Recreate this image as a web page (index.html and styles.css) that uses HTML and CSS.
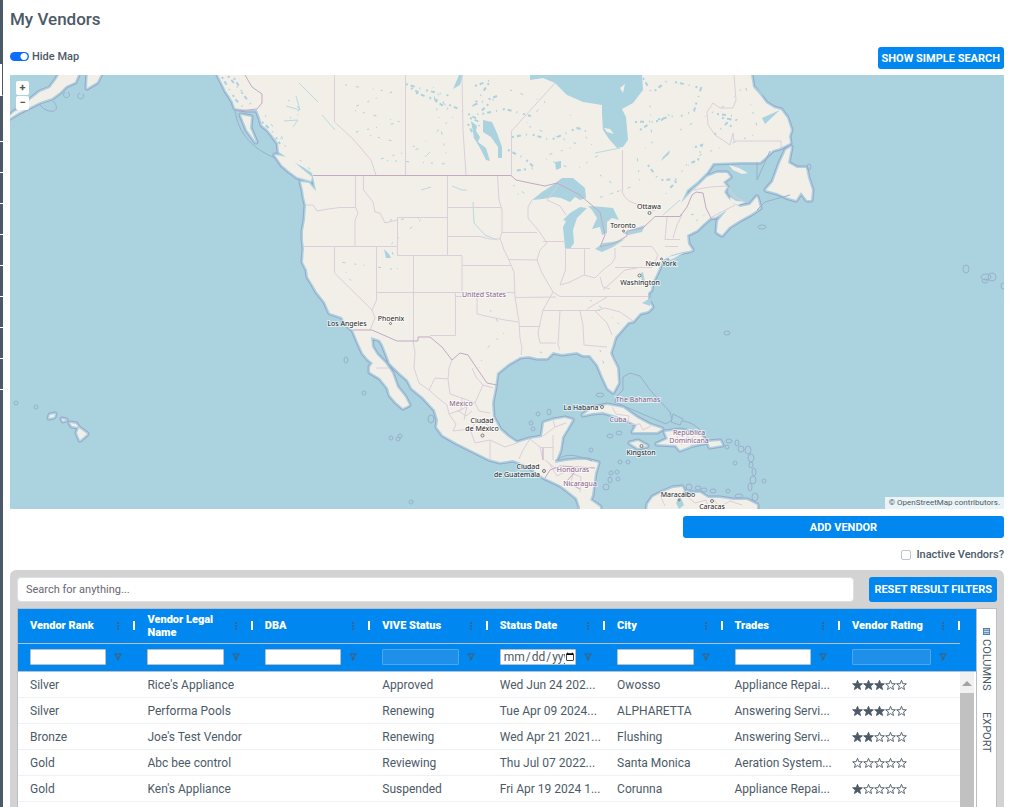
FILE: index.html
```html
<!DOCTYPE html>
<html lang="en">
<head>
    <meta charset="UTF-8">
    <meta name="viewport" content="width=device-width, initial-scale=1.0">
    <title>My Vendors</title>
    <link rel="stylesheet" href="styles.css">
</head>
<body>
    <!-- Shared icons -->
    <svg class="sprite" aria-hidden="true">
        <symbol id="star" viewBox="0 0 12 12">
            <path d="M6 .9 7.4 4.5 11.3 4.7 8.3 7.1 9.3 10.9 6 8.8 2.7 10.9 3.7 7.1 .7 4.7 4.6 4.5Z"/>
        </symbol>
        <symbol id="funnel" viewBox="0 0 8 8">
            <path d="M.8 1H7.2L4.8 4V6.2L3.3 7.2V4Z" fill="none" stroke="#4c5a67"/>
        </symbol>
        <symbol id="dots" viewBox="0 0 4 8">
            <path d="M1 0h2v2H1zM1 3h2v2H1zM1 6h2v2H1z" fill="#35659a"/>
        </symbol>
    </svg>

    <div class="app">
        <div class="sidebar">
            <div class="side-top"></div>
            <div class="side-item active"></div>
            <div class="side-item tall"></div>
            <div class="side-item"></div>
            <div class="side-item"></div>
            <div class="side-item"></div>
            <div class="side-item"></div>
            <div class="side-item"></div>
            <div class="side-item"></div>
            <div class="side-item"></div>
            <div class="side-item"></div>
        </div>

        <main class="content">
            <h1>My Vendors</h1>

            <div class="toolbar">
                <label class="switch"><input type="checkbox" checked>Hide Map</label>
                <button class="btn">SHOW SIMPLE SEARCH</button>
            </div>

            <div class="map">
                <svg class="map-svg" viewBox="10 75 994 434" role="img" aria-label="Map">
                    <defs>
                        <g id="land">
                            <path d="M218 60V75L222 83 226 91 230 97 233 102 235 108 246 110 257 110 260 118 262 125 267 129 272 135 278 143 279 152 290 160 303 167 312 173 314 181 316 191 313 188 309 183 301 182 303 190 304 197 306 205 305 220 303 231 303 240 304 248 303 262 307 270 308 277 313 285 317 292 325 302 328 309 330 313 342 317 347 325 353 330 358 342 363 353 368 359 373 363 370 367 370 372 380 378 388 388 390 395 396 402 403 408 409 405 405 397 397 387 392 373 385 363 377 355 372 347 371 337 380 340 383 345 387 355 390 363 400 373 408 380 412 388 423 397 435 410 438 420 437 427 443 435 457 443 477 453 489 459 500 462 513 460 527 465 543 477 560 485 563 487 577 498 580 507V525H600V507L590 500 592 495 593 487 595 473 598 463 587 460 577 460 566 461 555 463 560 450 562 437 568 427 572 420 565 418 553 420 544 423 542 437 530 439 517 443 508 437 500 430 493 417 492 403 495 387 497 373 508 364 520 357 529 356 537 358 547 358 553 352 562 354 577 352 583 355 590 355 598 365 603 377 608 388 613 392 618 383 617 368 612 358 610 353 612 347 615 337 628 322 633 321 640 313 648 311 652 307 648 300 648 293 651 290 652 283 657 273 660 266 663 260 672 255 683 252 689 251 692 250 688 244 687 235 697 230 703 224 710 218 716 217 727 210 718 221 717 232 722 235 729 227 740 220 751 214 760 208 757 197 750 205 740 207 733 203 728 198 724 192 727 187 723 182 730 177 727 173 717 173 707 177 699 185 693 190 681 203 687 190 697 182 707 172 713 163 740 162 760 162 773 150 780 148 790 143 789 136 791 130 787 118 781 110 774 108 766 103 760 95 753 87 751 75V60Z"/>
                            <path d="M791 147 786 150 780 163 773 182 766 190 777 193 786 197 796 200 801 192 807 200 811 200 812 190 808 178 806 168 797 168 788 163Z"/>
                            <path d="M275 155 282 156 290 158 301 168 312 177 311 181 297 177 289 171 282 165Z"/>
                            <path d="M241 115 251 117 250 128 253 135 256 142 247 130Z"/>
                            <path d="M5 121 14 112 22 108 30 100 40 92 50 88 56 80 62 70H80L75 82 66 86 60 92 52 98 40 102 30 107 18 113Z"/>
                            <path d="M88 70 101 74 97 82 87 88Z"/>
                            <path d="M583 415 593 408 607 405 623 408 637 418 650 425 662 429 657 432 633 432 637 425 620 417 603 412 592 413Z"/>
                            <path d="M665 432 680 430 690 432 700 435 707 442 693 445 680 450 676 445 657 444 668 439Z"/>
                            <path d="M708 442 720 441 722 445 710 447Z"/>
                            <path d="M630 443 638 441 647 446 638 448Z"/>
                            <path d="M645 525 648 504 653 497 663 492 673 488 682 487 684 491 679 496 687 497 690 493 700 493 708 498 720 498 733 500 747 500 757 505V525Z"/>
                            <path d="M79 428 87 434 80 440 77 433ZM50 415 55 414 54 417 49 418ZM62 419 66 420 63 421ZM70 423 76 424 78 427 72 426Z"/>
                        </g>
                    </defs>

                    <rect x="10" y="75" width="994" height="434" fill="#aad3df"/>

                    <!-- Territorial waters drawn as a halo round the land -->
                    <use href="#land" class="halo-line"/>
                    <use href="#land" class="halo-water"/>
                    <use href="#land" fill="#f2efe9"/>
                    <path class="islet" d="M235 110C238 135 255 150 275 158M630 373 640 376 650 390 670 412 672 420 666 424 640 413 615 402 616 397 623 390 623 377ZM673 414 683 419 680 425 671 422ZM683 421C695 423 701 430 705 437M757 210 765 202 790 195M757 162V180L770 151M555 461C565 453 575 454 592 461"/>
                    <path class="islet" d="M40 105 44 109C56 115 60 108 53 101M65 92a3 3 0 1 0 3 0M80 93a3 3 0 1 0 3 1"/>

                    <!-- Inland water -->
                    <g fill="#aad3df">
                        <path d="M530 75V80L543 78 555 83 567 95 583 102 602 105 602 115 603 130 609 139 617 148 623 147 628 140 626 117 622 109 633 103 643 90 642 75Z"/>
                        <path d="M532 200 542 192 553 185 562 178 573 178 585 188 586 198 580 200 575 197 570 202 561 198 553 197 543 199Z"/>
                        <path d="M565 248 563 227 566 221 563 220 570 213 580 207 587 208 577 218 573 230 574 243 570 249Z"/>
                        <path d="M588 206 603 207 613 208 619 220 612 218 607 222 607 233 602 235 600 227 592 229 597 218 592 210Z"/>
                        <path d="M595 249 603 243 612 242 625 239 613 247 602 252ZM623 233 630 230 645 225 642 232 628 235Z"/>
                        <path d="M483 120 492 122 497 133 502 147 502 158 498 158 498 147 491 137 483 132ZM471 121 477 126 476 131 480 137 478 142 486 148 490 161 486 160 480 148 474 138Z"/>
                        <path d="M555 162 561 161 561 168 556 170ZM459 75H463L460 85 453 89ZM384 249 389 254 391 258 386 258ZM663 157 670 150 669 154 661 161ZM676 503 680 496 684 505 679 509ZM641 273 643 272 646 287 642 284ZM652 297 642 303 650 306ZM762 118 780 110 765 124ZM767 98 757 91 754 86Z"/>
                    </g>
                    <g fill="#f2efe9">
                        <path d="M604 128 610 129 614 134 607 132ZM729 165 739 168 748 173 742 174 733 170ZM730 197 736 201 745 202 738 205 731 202ZM620 88 625 84 623 93ZM668 257 684 253 670 260Z"/>
                    </g>
                    <g class="speckle">
                        <path d="M411 88 424 96 445 103 461 110 479 120M416 93 431 98 448 109M406 84 425 90 451 96M475 86 491 80 474 105 497 96 477 115 505 109 531 116"/>
                        <path d="M512 137 530 134 551 140 577 128 591 133M508 150 524 158 535 168 513 171M468 124 476 140M470 118 480 122 478 131"/>
                        <path d="M635 122 660 121 673 112M640 130 655 120 674 116M643 78 652 93 668 80M675 82 701 88 694 111 681 116"/>
                        <path d="M717 114 734 116 726 124 714 135M722 118 736 120 728 129M695 147 702 145 698 160 686 165M648 165 659 180 679 179 668 190"/>
                        <path d="M222 77 229 89 236 100 244 108M228 76 240 90 252 106M234 78 247 100M262 122 272 131 280 144"/>
                    </g>
                    <g class="speckle sparse">
                        <path d="M345 85 392 92 349 109 401 122 356 132 421 148 377 160 448 164 432 85 453 117 425 142"/>
                        <path d="M510 90 545 102 525 125 580 145 541 157 575 170 599 155 568 112M600 175 622 190 598 198 640 184 637 155 652 143 650 105"/>
                        <path d="M680 130 726 105 745 85 759 133 700 155 680 173 665 195M513 185 528 196 512 193M390 220 423 218 390 245 398 270 340 262 351 281"/>
                        <path d="M490 310 505 332 485 350 479 368M590 300 605 310 620 325M680 215 706 214 690 225M600 350 607 376"/>
                        <path d="M265 115 275 130 286 147 280 133M300 160 315 174M540 352 552 355M288 100 305 112 290 118 301 108"/>
                    </g>
                    <path class="river" d="M299 83 310 94 318 102M286 106 300 110 296 96M284 121 298 120 293 127M452 186 462 190 467 190M421 190 431 187M473 202 474 223 485 235 497 240M663 215 680 200M620 148 595 153M425 157 430 152M322 115 335 130"/>

                    <!-- State and province lines -->
                    <g class="state">
                        <path d="M405.5 75V175M462 75 463 130 466 175M511.500 175V131L555 83M622.500 150V193Q626 202 640 205L655 211M334.500 75V122L340 127 352 138 360 147 371 160 376 175"/>
                        <path d="M306 205 313 205 317 211 328 209 340 207.500H355M355.500 175V207L358 213 355 220V247M303 246.500H397M363.500 175V190L373 202 375 212 380 213 385 223 397 220M397.500 217.500H447M397.500 217V255M447.500 175V255M447 207.500H501M447 236.500H480L490 239 500 239M397 255.500H462V292"/>
                        <path d="M497.500 175 499 200 502 210V232L500 238 504 250 508 258 514 272 515 297 519 322 520 338 522 348 521 355M502 232.500H537M462 265.500H511M376 292.500H515M413.500 255V341M376.500 247V300L372 310 375 318 370 330M334.500 247V273L372 310M455.500 292V335.500H430M455 296.500H477V314L490 317 505 320 518 322M508 259.500 538 260M515 297.500 556 297M519 326.500H539"/>
                        <path d="M560 183 547 200 560 206 566 215M532 200 528 207V218L538 230 547 243 540 250 537 260 542 273 553 292 543 310 538 333 540 343H556M543 241.500H565M565.500 248V270L560 285 570 282 584 275 595 278 603 270 612 263 615 258V248M565 248.500H590M584.500 248V275M553 292 560 296.500H648M543 310.500H600M560 311 558 345 560 350M580 311 583 325 584 345 607 347M615 267.500H652M621 246.500H652L658 255 655 262M667 217 665 240M682 215 677 225 673 238M680 239.500H665M665 246.500H678"/>
                        <path d="M595 311 607 323 612 335M595 311 605 308 620 312 633 321M587 309 607 297M603 290 612 282 625 270 637 268M600 277 603 287 610 289M734 75 736 100 733 108 720 108 713 103 707 112 708 125 715 135 730 145 733 133 734 141H781V148M693 190 710 187 727 186 735 197 745 202M710 218 735 205"/>
                        <path d="M413 341 415 352 414 368 419 383 429 390 435 378 448 379 449 368 452 360M429 390 438 398 447 405 449 414 461 410 462 398 475 403 483 385 476 377 472 368M448 379 450 394 462 398M483 385 493 388M475 403 479 411 490 413M449 414 456 424 453 431 470 429 480 419 493 430M470 429 475 443 490 440 490 460M490 440 505 447 517 443M530 439 523 450 519 459M530 439 540 447 543 460M553 420 555 427 543 436M555 427 566 423M553 435V460M540 447.500H553M545 460 560 472 575 467 570 485 590 485M549 463 557 476 566 471 581 477 580 492M376 368H388M461 410 467 406 464 420M457 410 466 416 472 411"/>
                        <path d="M612 407 616 414 629 416 628 425 640 424 643 430 651 426M680 431 677 437 682 445M686 432 689 440 695 436M690 446 699 439M660 495 665 506M688 497 695 503 706 500 709 509M714 500 720 507 730 501 742 505"/>
                    </g>
                    <g class="country">
                        <path d="M313 175.500H511L516 180 530 183 545 186 557 183 580 195 588 202 600 212 605 235 600 247 615 243 627 236V231L643 228 655 216.500H680L687 207 692 195 696 192 703 193 706 208 712 220"/>
                        <path d="M353 330H372L397 341H418V337H430L442 347 452 360 460 353 468 355 478 370 487 383 497 385M245 75 252 87 262 94 262 103 257 109 238 111M545 478 550 470 560 466 595 468M543 460 543 448M575 472 566 482 580 489"/>
                    </g>

                    <!-- Small islands -->
                    <g class="islet">
                        <ellipse cx="346" cy="360" rx="2" ry="3"/><ellipse cx="364" cy="393" rx="2" ry="2"/>
                        <ellipse cx="431" cy="419" rx="3" ry="4"/><ellipse cx="391" cy="438" rx="2" ry="2"/>
                        <ellipse cx="398" cy="439" rx="2" ry="2"/><ellipse cx="400" cy="436" rx="2" ry="2"/>
                        <ellipse cx="411" cy="502" rx="2" ry="2"/><ellipse cx="16" cy="403" rx="2" ry="2"/>
                        <ellipse cx="36" cy="407" rx="2" ry="2"/><ellipse cx="727" cy="333" rx="3" ry="2"/>
                        <ellipse cx="762" cy="227" rx="4" ry="2"/><ellipse cx="809" cy="167" rx="2" ry="3"/>
                        <ellipse cx="966" cy="269" rx="3" ry="4"/><ellipse cx="986" cy="277" rx="5" ry="3"/>
                        <ellipse cx="992" cy="277" rx="4" ry="4"/><ellipse cx="985" cy="281" rx="3" ry="2"/>
                        <ellipse cx="1003" cy="286" rx="2" ry="3"/>
                        <ellipse cx="538" cy="414" rx="2" ry="2"/><ellipse cx="549" cy="412" rx="2" ry="3"/>
                        <ellipse cx="531" cy="423" rx="2" ry="2"/><ellipse cx="533" cy="429" rx="2" ry="2"/>
                        <ellipse cx="610" cy="436" rx="3" ry="2"/><ellipse cx="619" cy="433" rx="3" ry="2"/>
                        <ellipse cx="591" cy="450" rx="2" ry="2"/><ellipse cx="620" cy="462" rx="2" ry="2"/>
                        <ellipse cx="628" cy="462" rx="2" ry="2"/><ellipse cx="611" cy="473" rx="2" ry="2"/>
                        <ellipse cx="617" cy="472" rx="2" ry="2"/><ellipse cx="610" cy="480" rx="2" ry="3"/>
                        <ellipse cx="618" cy="479" rx="2" ry="2"/><ellipse cx="606" cy="487" rx="3" ry="3"/>
                        <ellipse cx="600" cy="395" rx="4" ry="2"/><ellipse cx="735" cy="463" rx="2" ry="2"/>
                        <ellipse cx="729" cy="441" rx="3" ry="2"/><ellipse cx="727" cy="447" rx="2" ry="2"/>
                        <ellipse cx="737" cy="443" rx="2" ry="3"/><ellipse cx="741" cy="449" rx="3" ry="3"/>
                        <ellipse cx="748" cy="450" rx="3" ry="4"/><ellipse cx="751" cy="458" rx="3" ry="4"/>
                        <ellipse cx="751" cy="465" rx="2" ry="3"/><ellipse cx="754" cy="472" rx="2" ry="4"/>
                        <ellipse cx="753" cy="480" rx="3" ry="4"/><ellipse cx="750" cy="487" rx="2" ry="4"/>
                        <ellipse cx="764" cy="481" rx="2" ry="2"/><ellipse cx="755" cy="497" rx="3" ry="4"/>
                        <ellipse cx="689" cy="487" rx="3" ry="3"/><ellipse cx="698" cy="488" rx="3" ry="2"/>
                        <ellipse cx="704" cy="490" rx="3" ry="2"/><ellipse cx="713" cy="491" rx="3" ry="2"/>
                        <ellipse cx="728" cy="491" rx="2" ry="2"/><ellipse cx="739" cy="496" rx="4" ry="2"/>
                    </g>

                    <g class="pin">
                        <circle cx="649.500" cy="213" r="1.500"/><circle cx="623.500" cy="231" r="1"/>
                        <circle cx="661.500" cy="259" r="1"/><circle cx="639.500" cy="275.500" r="1.500"/>
                        <circle cx="390.500" cy="323.500" r="1"/><circle cx="482.500" cy="435.500" r="1.500"/>
                        <circle cx="544" cy="471" r="1.500"/><circle cx="602" cy="407" r="1.500"/>
                        <circle cx="641.500" cy="446" r="1.500"/><circle cx="712" cy="501" r="1.500"/>
                        <circle cx="679" cy="500" r="1"/>
                    </g>
                    <g class="city">
                        <text x="649" y="209">Ottawa</text>
                        <text x="623" y="228">Toronto</text>
                        <text x="661" y="266">New York</text>
                        <text x="640" y="285">Washington</text>
                        <text x="391" y="321">Phoenix</text>
                        <text x="347" y="326">Los Angeles</text>
                        <text x="482" y="423">Ciudad</text>
                        <text x="482" y="431">de México</text>
                        <text x="528" y="469">Ciudad</text>
                        <text x="517" y="477">de Guatemala</text>
                        <text x="581" y="410">La Habana</text>
                        <text x="641" y="455">Kingston</text>
                        <text x="678" y="497">Maracaibo</text>
                        <text x="712" y="509">Caracas</text>
                    </g>
                    <g class="city nation">
                        <text x="484" y="297">United States</text>
                        <text x="461" y="406">México</text>
                        <text x="638" y="402">The Bahamas</text>
                        <text x="618" y="422">Cuba</text>
                        <text x="689" y="435">República</text>
                        <text x="689" y="443">Dominicana</text>
                        <text x="573" y="472">Honduras</text>
                        <text x="580" y="486">Nicaragua</text>
                    </g>
                </svg>
                <div class="zoom">
                    <button aria-label="Zoom in">+</button>
                    <button aria-label="Zoom out">−</button>
                </div>
                <div class="attribution">© <a href="#">OpenStreetMap</a> contributors.</div>
            </div>

            <div class="actions">
                <button class="btn btn-add">ADD VENDOR</button>
                <label class="inactive"><input type="checkbox">Inactive Vendors?</label>
            </div>

            <div class="panel">
                <div class="search-row">
                    <input class="search" type="text" placeholder="Search for anything..." aria-label="Search for anything">
                    <button class="btn btn-reset">RESET RESULT FILTERS</button>
                </div>

                <div class="grid">
                    <div class="grid-body">
                        <table>
                            <thead>
                                <tr class="heads">
                                    <th><div class="head"><span>Vendor Rank</span><svg class="dots"><use href="#dots"/></svg></div></th>
                                    <th><div class="head"><span>Vendor Legal Name</span><svg class="dots"><use href="#dots"/></svg></div></th>
                                    <th><div class="head"><span>DBA</span><svg class="dots"><use href="#dots"/></svg></div></th>
                                    <th><div class="head"><span>VIVE Status</span><svg class="dots"><use href="#dots"/></svg></div></th>
                                    <th><div class="head"><span>Status Date</span><svg class="dots"><use href="#dots"/></svg></div></th>
                                    <th><div class="head"><span>City</span><svg class="dots"><use href="#dots"/></svg></div></th>
                                    <th><div class="head"><span>Trades</span><svg class="dots"><use href="#dots"/></svg></div></th>
                                    <th class="rating"><div class="head"><span>Vendor Rating</span><svg class="dots"><use href="#dots"/></svg></div></th>
                                </tr>
                                <tr class="filters">
                                    <td><div class="filter"><input type="text" aria-label="Vendor Rank filter"><svg class="funnel"><use href="#funnel"/></svg></div></td>
                                    <td><div class="filter"><input type="text" aria-label="Vendor Legal Name filter"><svg class="funnel"><use href="#funnel"/></svg></div></td>
                                    <td><div class="filter"><input type="text" aria-label="DBA filter"><svg class="funnel"><use href="#funnel"/></svg></div></td>
                                    <td><div class="filter"><input type="text" aria-label="VIVE Status filter" disabled><svg class="funnel"><use href="#funnel"/></svg></div></td>
                                    <td><div class="filter"><input type="date" aria-label="Status Date filter"><svg class="funnel"><use href="#funnel"/></svg></div></td>
                                    <td><div class="filter"><input type="text" aria-label="City filter"><svg class="funnel"><use href="#funnel"/></svg></div></td>
                                    <td><div class="filter"><input type="text" aria-label="Trades filter"><svg class="funnel"><use href="#funnel"/></svg></div></td>
                                    <td><div class="filter"><input type="text" aria-label="Vendor Rating filter" disabled><svg class="funnel"><use href="#funnel"/></svg></div></td>
                                </tr>
                            </thead>
                            <tbody>
                                <tr>
                                    <td>Silver</td><td>Rice's Appliance</td><td></td><td>Approved</td><td>Wed Jun 24 202...</td><td>Owosso</td><td>Appliance Repai...</td>
                                    <td><div class="stars"><svg class="on"><use href="#star"/></svg><svg class="on"><use href="#star"/></svg><svg class="on"><use href="#star"/></svg><svg><use href="#star"/></svg><svg><use href="#star"/></svg></div></td>
                                </tr>
                                <tr>
                                    <td>Silver</td><td>Performa Pools</td><td></td><td>Renewing</td><td>Tue Apr 09 2024...</td><td>ALPHARETTA</td><td>Answering Servi...</td>
                                    <td><div class="stars"><svg class="on"><use href="#star"/></svg><svg class="on"><use href="#star"/></svg><svg class="on"><use href="#star"/></svg><svg><use href="#star"/></svg><svg><use href="#star"/></svg></div></td>
                                </tr>
                                <tr>
                                    <td>Bronze</td><td>Joe's Test Vendor</td><td></td><td>Renewing</td><td>Wed Apr 21 2021...</td><td>Flushing</td><td>Answering Servi...</td>
                                    <td><div class="stars"><svg class="on"><use href="#star"/></svg><svg class="on"><use href="#star"/></svg><svg><use href="#star"/></svg><svg><use href="#star"/></svg><svg><use href="#star"/></svg></div></td>
                                </tr>
                                <tr>
                                    <td>Gold</td><td>Abc bee control</td><td></td><td>Reviewing</td><td>Thu Jul 07 2022...</td><td>Santa Monica</td><td>Aeration System...</td>
                                    <td><div class="stars"><svg><use href="#star"/></svg><svg><use href="#star"/></svg><svg><use href="#star"/></svg><svg><use href="#star"/></svg><svg><use href="#star"/></svg></div></td>
                                </tr>
                                <tr>
                                    <td>Gold</td><td>Ken's Appliance</td><td></td><td>Suspended</td><td>Fri Apr 19 2024 1...</td><td>Corunna</td><td>Appliance Repai...</td>
                                    <td><div class="stars"><svg class="on"><use href="#star"/></svg><svg><use href="#star"/></svg><svg><use href="#star"/></svg><svg><use href="#star"/></svg><svg><use href="#star"/></svg></div></td>
                                </tr>
                            </tbody>
                        </table>
                    </div>
                    <div class="gutter">
                        <div class="gutter-head"></div>
                        <div class="scrollbar">
                            <div class="arrow"></div>
                            <div class="thumb"></div>
                        </div>
                    </div>
                    <div class="side-buttons">
                        <button><svg class="cols" viewBox="0 0 8 8"><path d="M0 0h8v8H0z" fill="#4c7fb0"/><path d="M1 2h6M1 4h6M1 6h6" stroke="#dfe6ee"/></svg>COLUMNS</button>
                        <button>EXPORT</button>
                    </div>
                </div>
            </div>
        </main>
    </div>
</body>
</html>
```

FILE: styles.css
```css
* {
    box-sizing: border-box;
}
body {
    margin: 0;
    font-family: Roboto, Arial, sans-serif;
    font-size: 11px;
    color: #4c5a67;
    background-color: white;
}
button, input {
    font-family: inherit;
    font-size: inherit;
    color: inherit;
}
.sprite {
    display: none;
}
.app {
    display: flex;
    height: 100vh;
    overflow: hidden;
}

/* Collapsed sidebar */
.sidebar {
    width: 3px;
    flex-shrink: 0;
    background-color: #4c5a67;
}
.side-top {
    height: 64px;
}
.side-item {
    height: 31px;
    border-bottom: 1px solid white;
}
.side-item.active {
    height: 32px;
    background-color: white;
    border-right: 1px solid #4c5a67;
}
.side-item.tall {
    height: 46px;
}

.content {
    flex: 1;
    min-width: 0;
    display: flex;
    flex-direction: column;
    padding: 0 9px 0 7px;
}
h1 {
    margin: 0;
    padding-top: 9px;
    font-size: 17px;
    line-height: 20px;
    font-weight: 500;
}
.toolbar {
    display: flex;
    justify-content: space-between;
    align-items: center;
    padding: 18px 0 6px;
}
.switch, .inactive {
    display: flex;
    align-items: center;
    font-weight: 500;
}
.switch {
    gap: 3px;
    padding-bottom: 4px;
}
.switch input {
    appearance: none;
    width: 19px;
    height: 9px;
    margin: 0;
    border-radius: 5px;
    background: radial-gradient(circle at 14px 50%, white 3px, #0d6efd 4px);
}
.btn {
    height: 22px;
    padding: 0 4px;
    border: none;
    border-radius: 3px;
    background-color: #0087f0;
    color: white;
    font-weight: 700;
    cursor: pointer;
}

/* Map */
.map {
    position: relative;
}
.map-svg {
    display: block;
    width: 100%;
}
.halo-line {
    fill: none;
    stroke: #9ba6ca;
    stroke-width: 5px;
    stroke-linejoin: round;
}
.halo-water {
    fill: none;
    stroke: #aad3df;
    stroke-width: 3px;
    stroke-linejoin: round;
}
.state {
    fill: none;
    stroke: #dccedb;
}
.country {
    fill: none;
    stroke: #c3a9c4;
}
.islet {
    fill: none;
    stroke: #9aafcb;
}
.river {
    fill: none;
    stroke: #b8dae3;
}
.speckle {
    fill: none;
    stroke: #aad3df;
    stroke-width: 2px;
    stroke-dasharray: 2 3 4 5 1 6;
}
.speckle.sparse {
    stroke-width: 1px;
    stroke-dasharray: 2 9 3 14 1 7;
}
.pin {
    fill: #f2efe9;
    stroke: #777;
}
.city {
    font-family: "Noto Sans", sans-serif;
    font-size: 7px;
    text-anchor: middle;
    fill: #222;
    stroke: rgba(255, 255, 255, 0.6);
    stroke-width: 2px;
    paint-order: stroke;
}
.nation {
    fill: #856088;
}
.zoom {
    position: absolute;
    top: 6px;
    left: 6px;
    display: flex;
    flex-direction: column;
    gap: 1px;
}
.zoom button {
    width: 13px;
    height: 14px;
    padding: 0;
    border: none;
    border-radius: 2px;
    background-color: white;
    color: #555;
    font-weight: 700;
    line-height: 14px;
}
.attribution {
    position: absolute;
    right: 0;
    bottom: 0;
    padding: 0 4px;
    background-color: rgba(255, 255, 255, 0.75);
    font-size: 8px;
    line-height: 12px;
}
.attribution a {
    color: inherit;
    text-decoration: none;
}

.actions {
    display: flex;
    flex-direction: column;
    align-items: flex-end;
    gap: 10px;
    padding: 7px 0 9px;
}
.btn-add {
    width: 321px;
}
.inactive {
    gap: 5px;
    line-height: 13px;
}
.inactive input {
    appearance: none;
    width: 10px;
    height: 10px;
    margin: 0;
    border: 1px solid #bcc4cc;
    border-radius: 2px;
}

/* Results */
.panel {
    flex: 1;
    display: flex;
    flex-direction: column;
    padding: 7px 7px 0;
    border-radius: 6px 6px 0 0;
    background-color: #d3d3d3;
}
.search-row {
    display: flex;
    gap: 15px;
    margin-bottom: 6px;
}
.search {
    flex: 1;
    height: 25px;
    padding: 0 8px;
    border: 1px solid #dde1e6;
    border-radius: 4px;
}
.search::placeholder {
    color: #6a6670;
}
.btn-reset {
    height: 25px;
    padding: 0 5px;
}
.grid {
    flex: 1;
    display: flex;
    border: 1px solid #babfc7;
    border-bottom: none;
    background-color: white;
}
.grid-body {
    flex: 1;
    min-width: 0;
}
table {
    width: 100%;
    table-layout: fixed;
    border-collapse: collapse;
    font-size: 12px;
}
th, td {
    padding: 0 0 0 12px;
    text-align: left;
    white-space: nowrap;
}
thead {
    background-color: #0087f0;
}
.heads th {
    height: 34px;
    border-bottom: 1px solid #babfc7;
    color: white;
    font-size: 11px;
    font-weight: 900;
    line-height: 13px;
    white-space: normal;
}
.heads .rating {
    width: 120px;
}
.head {
    display: flex;
    align-items: center;
    border-right: 2px solid white;
    height: 9px;
}
.head span {
    flex: 1;
}
.dots {
    width: 4px;
    height: 8px;
    margin-right: 13px;
}
.filters td {
    height: 28px;
    border-bottom: 1px solid #babfc7;
}
.filter {
    display: flex;
    align-items: center;
    gap: 8px;
    padding-right: 13px;
}
.filter input {
    flex: 1;
    min-width: 0;
    height: 16px;
    padding: 0 0 0 2px;
    border: 1px solid #babfc7;
    border-radius: 1px;
    background-color: white;
}
.filter input:disabled {
    background-color: #1f90ea;
    border-color: #4fa5ee;
}
.filter input::-webkit-calendar-picker-indicator {
    width: 10px;
    height: 10px;
    margin: 0;
    padding: 0;
}
.funnel {
    width: 8px;
    height: 8px;
}
tbody td {
    height: 26px;
    padding-top: 1px;
    border-bottom: 1px solid #eff1f4;
}
.stars {
    display: flex;
}
.stars svg {
    width: 11px;
    height: 12px;
    overflow: visible;
    fill: white;
    stroke: #4c5a67;
    stroke-width: 1px;
}
.stars .on {
    fill: #4c5a67;
}
.gutter {
    width: 16px;
    display: flex;
    flex-direction: column;
}
.gutter-head {
    height: 63px;
    background-color: #0087f0;
    border-bottom: 1px solid #babfc7;
}
.scrollbar {
    flex: 1;
    display: flex;
    flex-direction: column;
    width: 14px;
    background-color: #f1f1f1;
}
.arrow {
    margin: 9px auto 7px;
    border: 5px solid transparent;
    border-top: none;
    border-bottom-color: #a3a3a3;
}
.thumb {
    flex: 1;
    background-color: #c1c1c1;
}
.side-buttons {
    width: 20px;
    display: flex;
    flex-direction: column;
    gap: 22px;
    padding-top: 19px;
    border-left: 1px solid #babfc7;
}
.side-buttons button {
    display: flex;
    align-items: center;
    gap: 4px;
    padding: 0;
    border: none;
    background: none;
    writing-mode: vertical-rl;
    line-height: 19px;
}
.cols {
    width: 7px;
    height: 7px;
}
```
